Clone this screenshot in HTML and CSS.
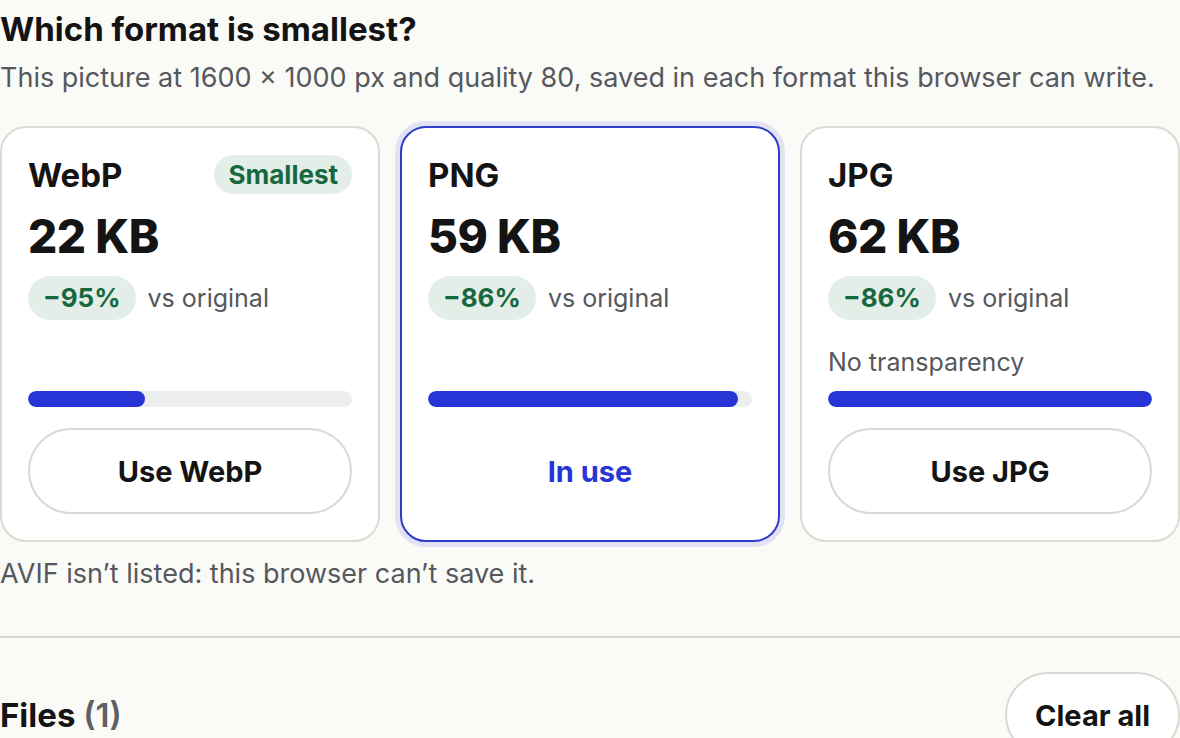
FILE: index.html
```html
<!DOCTYPE html>
<html lang="en">
<head>
<meta charset="utf-8">
<title>Which format is smallest?</title>
<link rel="stylesheet" href="styles.css">
</head>
<body>
<main class="page">
  <section class="formats">
    <h2 class="title">Which format is smallest?</h2>
    <p class="lead">This picture at 1600 × 1000 px and quality 80, saved in each format this browser can write.</p>
    <div class="cards">
      <article class="card">
        <div class="card-head">
          <h3 class="fmt">WebP</h3>
          <span class="badge">Smallest</span>
        </div>
        <div class="size">22 KB</div>
        <div class="delta"><span class="pill">−95%</span><span class="vs">vs original</span></div>
        <div class="card-foot">
          <div class="bar"><div class="fill" style="width:36%"></div></div>
          <button class="use" type="button">Use WebP</button>
        </div>
      </article>
      <article class="card card-active">
        <div class="card-head">
          <h3 class="fmt">PNG</h3>
        </div>
        <div class="size">59 KB</div>
        <div class="delta"><span class="pill">−86%</span><span class="vs">vs original</span></div>
        <div class="card-foot">
          <div class="bar"><div class="fill" style="width:95.7%"></div></div>
          <button class="use use-current" type="button">In use</button>
        </div>
      </article>
      <article class="card">
        <div class="card-head">
          <h3 class="fmt">JPG</h3>
        </div>
        <div class="size">62 KB</div>
        <div class="delta"><span class="pill">−86%</span><span class="vs">vs original</span></div>
        <div class="card-foot">
          <p class="note">No transparency</p>
          <div class="bar"><div class="fill" style="width:100%"></div></div>
          <button class="use" type="button">Use JPG</button>
        </div>
      </article>
    </div>
    <p class="aside">AVIF isn’t listed: this browser can’t save it.</p>
  </section>
  <hr class="divider">
  <section class="files">
    <h2 class="files-title">Files <span class="count">(1)</span></h2>
    <button class="clear" type="button">Clear all</button>
  </section>
</main>
</body>
</html>
```

FILE: styles.css
```css
* { box-sizing: border-box; }
html, body { margin: 0; padding: 0; }
body {
  background: #fafaf7;
  color: #141414;
  font-family: Inter, "Liberation Sans", sans-serif;
}
.page { width: 1180px; }
.formats { padding-top: 9px; }
.title {
  margin: 0;
  font-size: 33px;
  line-height: 40px;
  font-weight: 700;
}
.lead {
  margin: 12px 0 0;
  font-size: 27px;
  line-height: 34px;
  color: #55585d;
}
.cards {
  margin-top: 31px;
  display: grid;
  grid-template-columns: repeat(3, 1fr);
  gap: 20px;
}
.card {
  background: #fff;
  border: 2px solid #dcdad3;
  border-radius: 26px;
  padding: 27px 26px 26px;
  display: flex;
  flex-direction: column;
}
.card-active {
  border-color: #2f3cc9;
  box-shadow: 0 0 0 5px #e1e3f5;
}
.card-head {
  display: flex;
  align-items: center;
  justify-content: space-between;
  height: 39px;
}
.fmt {
  margin: 0;
  font-size: 33px;
  font-weight: 700;
}
.badge {
  background: #e2eee7;
  color: #17673f;
  font-weight: 700;
  font-size: 26px;
  line-height: 39px;
  padding: 0 14px;
  border-radius: 999px;
}
.size {
  margin-top: 16px;
  font-size: 46px;
  line-height: 52px;
  font-weight: 800;
  letter-spacing: -0.01em;
}
.delta {
  margin-top: 14px;
  display: flex;
  align-items: center;
  gap: 12px;
}
.pill {
  background: #e2eee7;
  color: #17673f;
  font-weight: 700;
  font-size: 26px;
  line-height: 44px;
  padding: 0 15px;
  border-radius: 999px;
}
.vs {
  font-size: 25px;
  color: #55585d;
}
.card-foot {
  margin-top: auto;
  display: flex;
  flex-direction: column;
}
.note {
  margin: 27px 0 0;
  font-size: 25px;
  line-height: 30px;
  color: #55585d;
}
.bar {
  margin-top: 14px;
  height: 16px;
  border-radius: 999px;
  background: #edefee;
  overflow: hidden;
}
.fill {
  height: 100%;
  background: #2835d6;
  border-radius: 999px;
}
.use {
  margin-top: 21px;
  height: 86px;
  border: 2px solid #dad8d0;
  border-radius: 999px;
  background: #fff;
  font-family: inherit;
  font-size: 29px;
  font-weight: 700;
  color: #141414;
}
.use-current {
  border-color: transparent;
  color: #2835d6;
}
.aside {
  margin: 15px 0 0;
  font-size: 27px;
  line-height: 34px;
  color: #55585d;
}
.divider {
  margin: 45px 0 0;
  border: 0;
  border-top: 2px solid #d9d9d3;
}
.files {
  margin-top: 34px;
  display: flex;
  align-items: center;
  justify-content: space-between;
}
.files-title {
  margin: 0;
  font-size: 33px;
  font-weight: 700;
}
.count {
  color: #5d6065;
  font-weight: 600;
}
.clear {
  height: 86px;
  padding: 0 28px;
  border: 2px solid #dad8d0;
  border-radius: 999px;
  background: #fff;
  font-family: inherit;
  font-size: 29px;
  font-weight: 700;
  color: #141414;
}
```
